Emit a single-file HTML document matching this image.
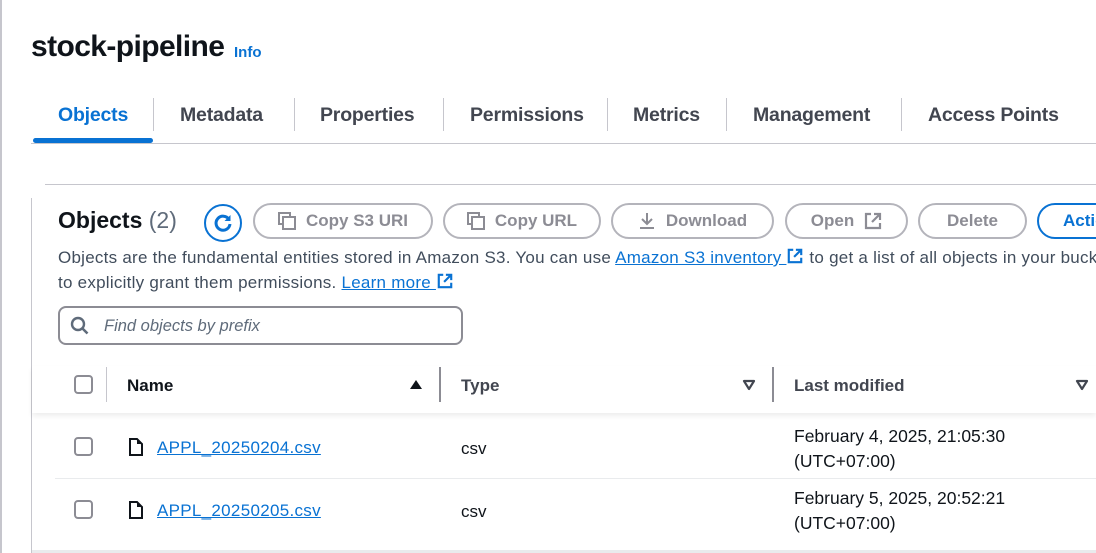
<!DOCTYPE html>
<html><head><meta charset="utf-8"><style>
*{box-sizing:border-box;margin:0;padding:0}
body{width:1096px;height:553px;overflow:hidden;background:#fff;font-family:"Liberation Sans",sans-serif;color:#0f141a;position:relative}
.a{position:absolute;white-space:nowrap}
.tab{position:absolute;top:104px;font-size:19.5px;font-weight:bold;color:#424650;letter-spacing:-0.2px}
.sep{position:absolute;top:98px;width:1px;height:33px;background:#c6c6cd}
.btn{position:absolute;top:203px;height:36px;border:2px solid #b4b4bb;border-radius:18px;color:#8c8c94;font-weight:bold;font-size:17px;display:flex;align-items:center;justify-content:center;gap:10px}
.cb{position:absolute;width:19px;height:19px;border:2px solid #8c8c94;border-radius:4px;left:74px}
.lnk{color:#0972d3;text-decoration:underline}
.th{position:absolute;top:376px;font-size:17px;font-weight:bold;color:#0f141a}
.tsep{position:absolute;top:367px;width:2px;height:35px;background:#8c8c94}
.td{position:absolute;font-size:17px;color:#0f141a}
.desc{font-size:17px;color:#414d5c;letter-spacing:0.25px}
</style></head><body>
<div class="a" style="left:0;top:0;width:2px;height:553px;background:#c6c6cd"></div>
<div class="a" style="left:31px;top:30px;font-size:30px;font-weight:bold;letter-spacing:-0.6px">stock-pipeline</div>
<div class="a" style="left:234px;top:44px;font-size:15px;font-weight:bold;color:#0972d3">Info</div>

<div class="tab" style="left:58px;color:#0972d3">Objects</div>
<div class="sep" style="left:153px"></div>
<div class="tab" style="left:180px">Metadata</div>
<div class="sep" style="left:294px"></div>
<div class="tab" style="left:320px">Properties</div>
<div class="sep" style="left:443px"></div>
<div class="tab" style="left:470px">Permissions</div>
<div class="sep" style="left:607px"></div>
<div class="tab" style="left:633px">Metrics</div>
<div class="sep" style="left:726px"></div>
<div class="tab" style="left:753px">Management</div>
<div class="sep" style="left:901px"></div>
<div class="tab" style="left:928px">Access Points</div>
<div class="a" style="left:31px;top:143px;width:1065px;height:1px;background:#c6c6cd"></div>
<div class="a" style="left:33px;top:138px;width:120px;height:5px;border-radius:3px;background:#0972d3"></div>

<div class="a" style="left:45px;top:184px;width:1051px;height:1px;background:#c6c6cd"></div>
<div class="a" style="left:31px;top:198px;width:1px;height:355px;background:#c6c6cd"></div>
<div class="a" style="left:32px;top:550px;width:1064px;height:3px;background:#e9ebed"></div>

<div class="a" style="left:58px;top:207px;font-size:23px"><b>Objects</b> <span style="color:#5f6b7a">(2)</span></div>
<div class="a" style="left:204px;top:204px;width:38px;height:38px;border:2px solid #0972d3;border-radius:50%"></div>
<svg class="a" style="left:212px;top:212px" width="22" height="22" viewBox="0 0 22 22"><path d="M17 7.5A7 7 0 1 0 18 12" fill="none" stroke="#0972d3" stroke-width="3"/><path d="M18.5 3v6h-6z" fill="#0972d3"/></svg>

<div class="btn" style="left:253px;width:180px"><svg width="18" height="18"><rect x="1" y="1" width="11" height="11" fill="none" stroke="#8c8c94" stroke-width="2"/><rect x="5" y="5" width="12" height="12" fill="#fff" stroke="#8c8c94" stroke-width="2"/></svg>Copy S3 URI</div>
<div class="btn" style="left:443px;width:158px"><svg width="18" height="18"><rect x="1" y="1" width="11" height="11" fill="none" stroke="#8c8c94" stroke-width="2"/><rect x="5" y="5" width="12" height="12" fill="#fff" stroke="#8c8c94" stroke-width="2"/></svg>Copy URL</div>
<div class="btn" style="left:611px;width:163px"><svg width="18" height="18"><path d="M9 1v11M4 7l5 5 5-5M2 16h14" fill="none" stroke="#8c8c94" stroke-width="2"/></svg>Download</div>
<div class="btn" style="left:785px;width:123px">Open<svg width="18" height="18"><path d="M7 2H2v14h14v-5M10 2h6v6M16 2l-8 8" fill="none" stroke="#8c8c94" stroke-width="2.2"/></svg></div>
<div class="btn" style="left:918px;width:109px">Delete</div>
<div class="btn" style="left:1037px;width:120px;border-color:#0972d3;color:#0972d3;justify-content:flex-start;padding-left:24px">Actions</div>

<div class="a desc" style="left:58px;top:248px">Objects are the fundamental entities stored in Amazon S3. You can use <span class="lnk">Amazon S3 inventory </span><svg width="18" height="16" viewBox="0 0 18 18" style="vertical-align:-1px"><path d="M7 2H2v14h14v-5M10 2h6v6M16 2l-8 8" fill="none" stroke="#0972d3" stroke-width="2.4"/></svg> to get a list of all objects in your bucket</div>
<div class="a desc" style="left:58px;top:273px">to explicitly grant them permissions. <span class="lnk">Learn more </span><svg width="18" height="16" viewBox="0 0 18 18" style="vertical-align:-1px"><path d="M7 2H2v14h14v-5M10 2h6v6M16 2l-8 8" fill="none" stroke="#0972d3" stroke-width="2.4"/></svg></div>

<div class="a" style="left:58px;top:306px;width:405px;height:39px;border:2px solid #8c8c94;border-radius:8px"></div>
<svg class="a" style="left:70px;top:316px" width="20" height="20"><circle cx="8" cy="8" r="6" fill="none" stroke="#5f6b7a" stroke-width="2.4"/><path d="M12.5 12.5l5 5" stroke="#5f6b7a" stroke-width="2.6"/></svg>
<div class="a" style="left:104px;top:317px;font-size:16.5px;font-style:italic;color:#5f6b7a">Find objects by prefix</div>

<div class="a" style="left:32px;top:366px;width:1064px;height:47px;box-shadow:0 3px 5px rgba(0,0,0,0.07)"></div>
<div class="cb" style="top:375px"></div>
<div class="a" style="left:106px;top:367px;width:1px;height:35px;background:#c6c6cd"></div>
<div class="th" style="left:127px">Name</div>
<svg class="a" style="left:409px;top:378px" width="14" height="12"><path d="M1 11L7 2l6 9z" fill="#0f141a"/></svg>
<div class="tsep" style="left:439px"></div>
<div class="th" style="left:461px;color:#424650">Type</div>
<svg class="a" style="left:742px;top:379px" width="14" height="12"><path d="M2 2h10L7 10z" fill="none" stroke="#424650" stroke-width="2.2" stroke-linejoin="round"/></svg>
<div class="tsep" style="left:772px"></div>
<div class="th" style="left:794px;color:#424650">Last modified</div>
<svg class="a" style="left:1075px;top:379px" width="14" height="12"><path d="M2 2h10L7 10z" fill="none" stroke="#424650" stroke-width="2.2" stroke-linejoin="round"/></svg>

<div class="cb" style="top:437px"></div>
<svg class="a" style="left:128px;top:437px" width="16" height="20"><path d="M2 2h7l5 5v11H2z" fill="none" stroke="#0f141a" stroke-width="2"/><path d="M9 2v5h5z" fill="#0f141a"/></svg>
<div class="td" style="left:157px;top:438px;letter-spacing:0.3px"><span class="lnk">APPL_20250204.csv</span></div>
<div class="td" style="left:461px;top:439px">csv</div>
<div class="td" style="left:794px;top:426px;font-size:17.5px">February 4, 2025, 21:05:30</div>
<div class="td" style="left:794px;top:451px;font-size:17.5px">(UTC+07:00)</div>
<div class="a" style="left:55px;top:478px;width:1041px;height:1px;background:#e9ebed"></div>

<div class="cb" style="top:500px"></div>
<svg class="a" style="left:128px;top:500px" width="16" height="20"><path d="M2 2h7l5 5v11H2z" fill="none" stroke="#0f141a" stroke-width="2"/><path d="M9 2v5h5z" fill="#0f141a"/></svg>
<div class="td" style="left:157px;top:501px;letter-spacing:0.3px"><span class="lnk">APPL_20250205.csv</span></div>
<div class="td" style="left:461px;top:502px">csv</div>
<div class="td" style="left:794px;top:488px;font-size:17.5px">February 5, 2025, 20:52:21</div>
<div class="td" style="left:794px;top:513px;font-size:17.5px">(UTC+07:00)</div>
</body></html>
